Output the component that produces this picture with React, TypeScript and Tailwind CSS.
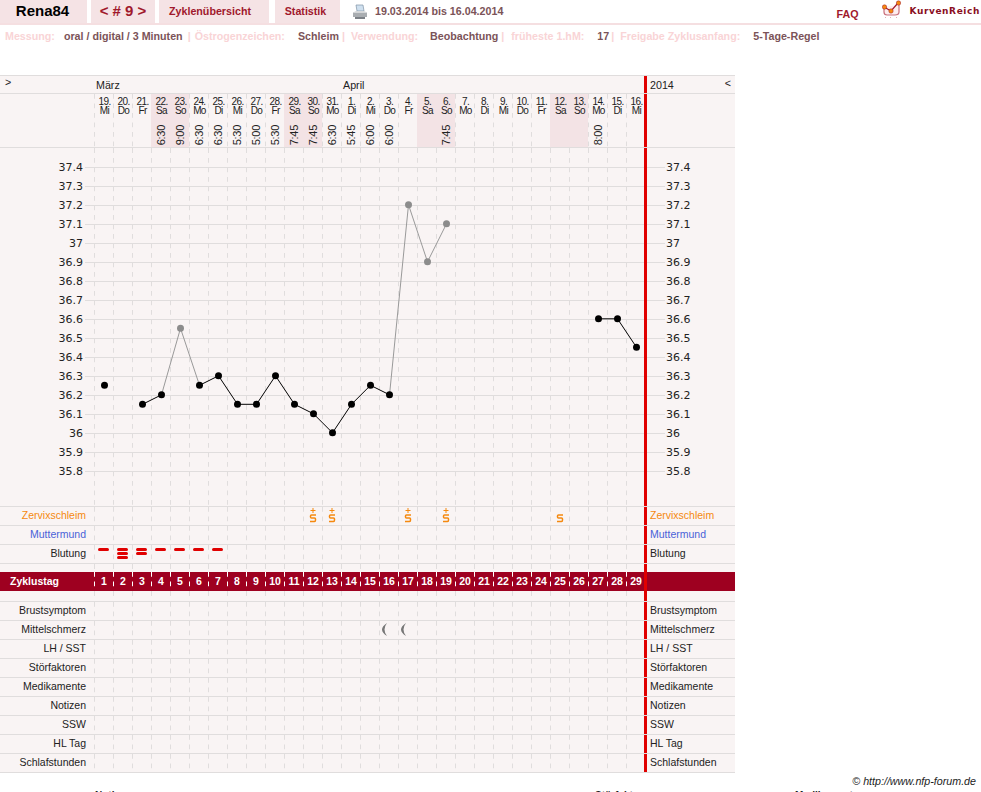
const weekdays = ["Mi", "Do", "Fr", "Sa", "So", "Mo", "Di"];

const days = Array.from({ length: 29 }, (_, i) => ({
  cycle: i + 1,
  date: i < 13 ? i + 19 : i - 12,
  weekday: weekdays[i % 7],
  weekend: i % 7 === 3 || i % 7 === 4,
}));

const times: Record<number, string> = {
  4: "6:30", 5: "9:00", 6: "6:30", 7: "6:30", 8: "5:30", 9: "5:00", 10: "5:30", 11: "7:45",
  12: "7:45", 13: "6:30", 14: "5:45", 15: "6:00", 16: "6:00", 19: "7:45", 27: "8:00",
};

const scale = ["37.4", "37.3", "37.2", "37.1", "37", "36.9", "36.8", "36.7", "36.6", "36.5", "36.4", "36.3", "36.2", "36.1", "36", "35.9", "35.8"];

const cycleY = (t: number) => 18.8 + (37.4 - t) * 190;
const cycleX = (c: number) => 10.5 + (c - 1) * 19;

const black: [number, number][] = [[1, 36.25], [3, 36.15], [4, 36.2], [6, 36.25], [7, 36.3], [8, 36.15], [9, 36.15], [10, 36.3], [11, 36.15], [12, 36.1], [13, 36], [14, 36.15], [15, 36.25], [16, 36.2], [27, 36.6], [28, 36.6], [29, 36.45]];
const gray: [number, number][] = [[5, 36.55], [17, 37.2], [18, 36.9], [19, 37.1]];

const toPoints = (list: [number, number][]) => list.map(([c, t]) => `${cycleX(c)},${cycleY(t)}`).join(" ");

const dash = "bg-[linear-gradient(#e0dddd_50%,transparent_50%)] bg-[length:1px_9.5px] bg-repeat-y";
const rowLine = "border-b border-[#e0dddd]";
const redLine = "border-l-[3px] border-[#e00000]";

const DashCells = ({ children }: { children?: (cycle: number) => React.ReactNode }) => (
  <div className="flex h-full w-[550px] shrink-0">
    {days.map((d) => (
      <div key={d.cycle} className={`h-full w-[19px] shrink-0 ${dash}`}>
        {children && children(d.cycle)}
      </div>
    ))}
  </div>
);

const SymbolS = ({ plus }: { plus?: boolean }) => (
  <svg width="19" height="18" viewBox="0 0 19 18" className="block">
    {plus && <path d="M7.500 3.500h5M10 1v5" stroke="#f5890f" strokeWidth="1" fill="none" />}
    <path d="M13 8H8.500Q7.500 8 7.500 9V10Q7.500 11 8.500 11H11.500Q12.500 11 12.500 12V13Q12.500 14.500 11.500 14.500H7" stroke="#f5890f" strokeWidth="1.500" fill="none" />
  </svg>
);

const Crescent = () => (
  <svg width="19" height="18" viewBox="0 0 19 18" className="block">
    <path d="M8 2Q-2 8.500 8 15Q3 8.500 8 2Z" fill="#777" />
  </svg>
);

const bleeding: Record<number, number> = { 1: 1, 2: 3, 3: 2, 4: 1, 5: 1, 6: 1, 7: 1 };

const DataRow = ({ label, color = "text-[#222]", children }: { label: string; color?: string; children?: (cycle: number) => React.ReactNode }) => (
  <div className={`flex h-[19px] text-[10.500px] ${rowLine}`}>
    <div className={`flex w-[94px] shrink-0 items-center justify-end pr-[8px] ${color}`}>{label}</div>
    <DashCells>{children}</DashCells>
    <div className={`flex flex-1 items-center pl-[3px] ${redLine} ${color}`}>{label}</div>
  </div>
);

const GapRow = ({ className }: { className: string }) => (
  <div className={`flex ${className}`}>
    <div className="w-[94px] shrink-0" />
    <DashCells />
    <div className={`flex-1 ${redLine}`} />
  </div>
);

const App = () => {
  return (
    <div className="h-[792px] w-[981px] overflow-hidden bg-white font-['Liberation_Sans',Arial,sans-serif] text-[10.700px] text-[#222]">
      {/* top tabs */}
      <div className="flex h-[25px] items-start whitespace-nowrap border-b-2 border-[#f5dfe1]">
        <div className="flex h-[23px] w-[87px] items-center justify-center bg-[#f5e3e5] pr-[2px] text-[15px] font-bold text-black">Rena84</div>
        <div className="ml-[4px] flex h-[23px] w-[64px] items-center justify-center bg-[#f5e3e5] text-[15px] font-bold text-[#a0182c]">&lt; # 9 &gt;</div>
        <div className="ml-[4px] flex h-[23px] w-[110px] items-center justify-center bg-[#f5e3e5] pr-[8px] font-bold text-[#a0182c]">Zyklenübersicht</div>
        <div className="ml-[6px] flex h-[23px] w-[65px] items-center justify-center bg-[#f5e3e5] pr-[4px] font-bold text-[#a0182c]">Statistik</div>
        <svg width="16" height="16" viewBox="0 0 16 16" className="ml-[12px] mt-[4px] shrink-0">
          <path d="M4 1h7l1 6H5z" fill="#cfe0ef" stroke="#7f93a6" strokeWidth="0.7" />
          <path d="M1 8.500h14v4.500H1z" fill="#a9adb1" />
          <path d="M1 8.500 4 7h8l3 1.500z" fill="#d6d8da" />
          <path d="M3 13h10v2H3z" fill="#7b8086" />
        </svg>
        <div className="ml-[7px] flex h-[23px] items-center font-bold text-[#7b5358]">19.03.2014 bis 16.04.2014</div>
        <div className="ml-auto mt-[6px] pr-px font-bold text-[#a0182c]">FAQ</div>
        <svg width="20" height="19" viewBox="0 0 20 19" className="ml-[23px] shrink-0">
          <path d="M2 7v5Q2 15 5 15H13Q17 15 17 12V5" fill="#fdeeef" stroke="#c9707c" strokeWidth="1.200" />
          <path d="M2 7 9 11 16 3" fill="none" stroke="#a0182c" strokeWidth="1.200" />
          <path d="M3 17.500h1M8 17.500h1M14 17.500h1" stroke="#e0b0b5" strokeWidth="1" />
          <circle cx="2.500" cy="7" r="2.200" fill="#f5890f" stroke="#a0182c" strokeWidth="0.500" />
          <circle cx="9" cy="11" r="2.200" fill="#f5890f" stroke="#a0182c" strokeWidth="0.500" />
          <circle cx="16.500" cy="3" r="2.200" fill="#f5890f" stroke="#a0182c" strokeWidth="0.500" />
        </svg>
        <div className="ml-[7px] mt-[5px] pr-px font-['DejaVu_Sans',sans-serif] text-[9px] font-bold tracking-[0.6px] text-[#8a0f1f]">KurvenReich</div>
      </div>

      {/* settings line */}
      <div className="flex h-[50px] items-start whitespace-pre pl-[5px] pt-[5px] font-bold leading-[13px] text-[#7b5358]">
        <span className="text-[#f9d4d6]">Messung:</span>
        <span className="ml-[9px]">oral / digital / 3 Minuten</span>
        <span className="ml-[5px] text-[#f9d4d6]">|</span>
        <span className="ml-[4px] text-[#f9d4d6]">Östrogenzeichen:</span>
        <span className="ml-[13px]">Schleim</span>
        <span className="ml-[3px] text-[#f9d4d6]">|</span>
        <span className="ml-[6px] text-[#f9d4d6]">Verwendung:</span>
        <span className="ml-[12px]">Beobachtung</span>
        <span className="ml-[3px] text-[#f9d4d6]">|</span>
        <span className="ml-[7px] text-[#f9d4d6]">früheste 1.hM:</span>
        <span className="ml-[13px]">17</span>
        <span className="ml-[2px] text-[#f9d4d6]">|</span>
        <span className="ml-[6px] text-[#f9d4d6]">Freigabe Zyklusanfang:</span>
        <span className="ml-[13px]">5-Tage-Regel</span>
      </div>

      {/* chart table */}
      <div className="w-[735px] bg-[#f9f4f4]">
        <div className={`flex h-[19px] border-t border-[#e0dddd] ${rowLine}`}>
          <div className="w-[94px] shrink-0 pl-[5px] leading-[12px]">&gt;</div>
          <div className="flex w-[550px] shrink-0 items-center pl-[2px] pt-[1px]">
            <span className="w-[247px]">März</span>
            <span>April</span>
          </div>
          <div className={`flex flex-1 items-center justify-between pl-[3px] pr-[4px] pt-[1px] ${redLine}`}>
            <span>2014</span>
            <span className="-mt-[4px]">&lt;</span>
          </div>
        </div>

        {/* dates */}
        <div className={`flex h-[54px] ${rowLine}`}>
          <div className="w-[94px] shrink-0" />
          <div className="flex w-[550px] shrink-0">
            {days.map((d) => (
              <div key={d.cycle} className={`flex h-full w-[19px] shrink-0 flex-col items-center ${d.weekend ? "bg-[#f3e3e5]" : dash}`}>
                <div className="h-[31px] pl-[2px] pt-[3px] text-center text-[10px] leading-[9px] tracking-[-0.6px]">
                  {d.date}.
                  <br />
                  {d.weekday}
                </div>
                {times[d.cycle] && (
                  <div className="rotate-180 pr-[2px] text-[11px] leading-[13px] tracking-[-0.3px] [writing-mode:vertical-rl]">{times[d.cycle]}</div>
                )}
              </div>
            ))}
          </div>
          <div className={`flex-1 ${redLine}`} />
        </div>

        {/* temperature curve */}
        <div className="relative">
          <GapRow className="h-[10px]" />
          {scale.map((t) => (
            <div key={t} className="flex h-[19px] items-center">
              <div className="w-[85px] shrink-0 pr-[2px] pt-px text-right font-['DejaVu_Sans',sans-serif] text-[11px]">{t}</div>
              <div className="h-px w-[9px] shrink-0 bg-[#e0dddd]" />
              <div className="h-full bg-[linear-gradient(#e0dddd,#e0dddd)] bg-[length:100%_1px] bg-[position:0_9px] bg-no-repeat">
                <DashCells />
              </div>
              <div className={`flex h-full flex-1 items-center ${redLine}`}>
                <div className="h-px w-[18px] shrink-0 bg-[#e0dddd]" />
                <div className="pl-[1px] pt-px font-['DejaVu_Sans',sans-serif] text-[11px]">{t}</div>
              </div>
            </div>
          ))}
          <GapRow className={`h-[26px] ${rowLine}`} />
          <svg width="551" height="358" viewBox="0 0 551 358" className="absolute left-[94px] top-0">
            <polyline points={toPoints([[4, 36.2], [5, 36.55], [6, 36.25]])} fill="none" stroke="#999" strokeWidth="1" />
            <polyline points={toPoints([[16, 36.2], [17, 37.2], [18, 36.9], [19, 37.1]])} fill="none" stroke="#999" strokeWidth="1" />
            <polyline points={toPoints(black.slice(1, 3))} fill="none" stroke="#000" strokeWidth="1" />
            <polyline points={toPoints(black.slice(3, 14))} fill="none" stroke="#000" strokeWidth="1" />
            <polyline points={toPoints(black.slice(14))} fill="none" stroke="#000" strokeWidth="1" />
            {black.map(([c, t]) => (
              <circle key={c} cx={cycleX(c)} cy={cycleY(t)} r="3.500" fill="#000" />
            ))}
            {gray.map(([c, t]) => (
              <circle key={c} cx={cycleX(c)} cy={cycleY(t)} r="3.500" fill="#8c8c8c" />
            ))}
          </svg>
        </div>

        <DataRow label="Zervixschleim" color="text-[#f5890f]">
          {(c) => ([12, 13, 17, 19].includes(c) ? <SymbolS plus /> : c === 25 ? <SymbolS /> : null)}
        </DataRow>
        <DataRow label="Muttermund" color="text-[#4a62d8]" />
        <DataRow label="Blutung">
          {(c) =>
            bleeding[c] ? (
              <div className="flex flex-col items-center gap-[1px] pt-[3px]">
                {Array.from({ length: bleeding[c] }, (_, i) => (
                  <div key={i} className="h-[3px] w-[11px] rounded-full bg-[#e00000]" />
                ))}
              </div>
            ) : null
          }
        </DataRow>
        <GapRow className="h-[8px]" />

        <div className="flex h-[19px] bg-[#9e0020] text-[10.500px] font-bold text-white">
          <div className="flex w-[94px] shrink-0 items-center pl-[10px]">Zyklustag</div>
          <div className="flex w-[550px] shrink-0">
            {days.map((d) => (
              <div key={d.cycle} className="flex h-full w-[19px] shrink-0 items-center justify-center bg-[linear-gradient(#fff_50%,transparent_50%)] bg-[length:1px_9.5px] bg-repeat-y pl-px">
                {d.cycle}
              </div>
            ))}
          </div>
          <div className={`flex-1 ${redLine}`} />
        </div>

        <GapRow className={`h-[11px] ${rowLine}`} />
        <DataRow label="Brustsymptom" />
        <DataRow label="Mittelschmerz">{(c) => (c === 16 || c === 17 ? <Crescent /> : null)}</DataRow>
        <DataRow label="LH / SST" />
        <DataRow label="Störfaktoren" />
        <DataRow label="Medikamente" />
        <DataRow label="Notizen" />
        <DataRow label="SSW" />
        <DataRow label="HL Tag" />
        <DataRow label="Schlafstunden" />
      </div>

      <div className="pr-[5px] pt-[1px] text-right text-[10.700px] italic leading-[14px]">© http://www.nfp-forum.de</div>
      <div className="flex pl-[95px] text-[10px] font-bold">
        <span className="w-[500px]">Notizen</span>
        <span className="w-[200px]">Störfaktoren</span>
        <span>Medikamente</span>
      </div>
    </div>
  );
};

export default App;
